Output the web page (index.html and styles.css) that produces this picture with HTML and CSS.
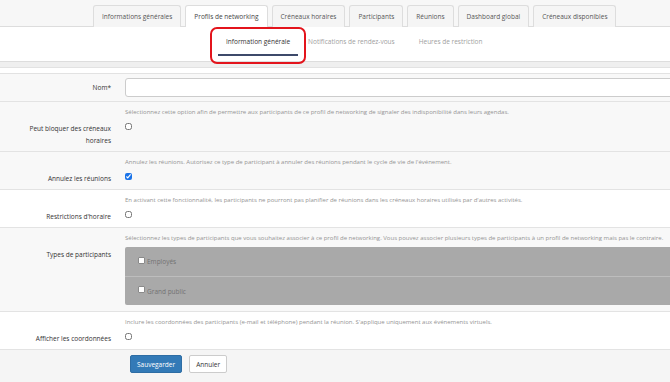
FILE: index.html
```html
<!DOCTYPE html>
<html lang="fr">
<head>
  <meta charset="UTF-8" />
  <meta name="viewport" content="width=device-width, initial-scale=1.0"/>
  <title>Profils de networking</title>
  <link rel="stylesheet" href="styles.css">
</head>
<body>
  <div class="page">
    <!-- Main tabs -->
    <nav class="tabs">
      <a class="tab">Informations générales</a>
      <a class="tab active">Profils de networking</a>
      <a class="tab">Créneaux horaires</a>
      <a class="tab">Participants</a>
      <a class="tab">Réunions</a>
      <a class="tab">Dashboard global</a>
      <a class="tab">Créneaux disponibles</a>
    </nav>

    <!-- Sub tabs -->
    <nav class="subtabs">
      <a class="subtab active">Information générale</a>
      <a class="subtab">Notifications de rendez-vous</a>
      <a class="subtab">Heures de restriction</a>
      <span class="highlight"></span>
    </nav>

    <div class="spacer"></div>

    <form class="form">
      <div class="row row-name">
        <label class="label">Nom*</label>
        <div class="field"><input type="text" class="input"></div>
      </div>

      <div class="row">
        <label class="label">Peut bloquer des créneaux horaires</label>
        <div class="field">
          <p class="help">Sélectionnez cette option afin de permettre aux participants de ce profil de networking de signaler des indisponibilité dans leurs agendas.</p>
          <input type="checkbox" class="check">
        </div>
      </div>

      <div class="row">
        <label class="label">Annulez les réunions</label>
        <div class="field">
          <p class="help">Annulez les réunions. Autorisez ce type de participant à annuler des réunions pendant le cycle de vie de l'événement.</p>
          <input type="checkbox" class="check" checked>
        </div>
      </div>

      <div class="row white">
        <label class="label">Restrictions d'horaire</label>
        <div class="field">
          <p class="help">En activant cette fonctionnalité, les participants ne pourront pas planifier de réunions dans les créneaux horaires utilisés par d'autres activités.</p>
          <input type="checkbox" class="check">
        </div>
      </div>

      <div class="row">
        <label class="label">Types de participants</label>
        <div class="field">
          <p class="help">Sélectionnez les types de participants que vous souhaitez associer à ce profil de networking. Vous pouvez associer plusieurs types de participants à un profil de networking mais pas le contraire.</p>
          <div class="types">
            <div class="type"><input type="checkbox" class="type-check"> Employés</div>
            <div class="type"><input type="checkbox" class="type-check"> Grand public</div>
          </div>
        </div>
      </div>

      <div class="row white">
        <label class="label">Afficher les coordonnées</label>
        <div class="field">
          <p class="help">Inclure les coordonnées des participants (e-mail et téléphone) pendant la réunion. S'applique uniquement aux événements virtuels.</p>
          <input type="checkbox" class="check">
        </div>
      </div>

      <div class="actions">
        <button type="button" class="btn btn-primary">Sauvegarder</button>
        <button type="button" class="btn">Annuler</button>
      </div>
    </form>
  </div>
</body>
</html>
```

FILE: styles.css
```css
html, body {
  margin: 0;
  overflow: hidden;
}
body {
  font-family: "Open Sans", "Noto Sans", sans-serif;
  background-color: #fff;
  color: #333;
}
.page {
  width: 780px;
}
.tabs {
  display: flex;
  gap: 4px;
  padding: 5px 0 0 93px;
  background-color: #f7f7f7;
  border-bottom: 1px solid #ddd;
  height: 21px;
}
.tab {
  display: flex;
  align-items: center;
  padding: 0 8px;
  font-size: 6.5px;
  color: #555;
  background-color: #f5f5f5;
  border: 1px solid #ddd;
  border-bottom: none;
  border-radius: 3px 3px 0 0;
  margin-bottom: -1px;
}
.tab.active {
  background-color: #fff;
  color: #444;
  padding-bottom: 1px;
}
.subtabs {
  position: relative;
  display: flex;
  gap: 2px;
  height: 34px;
  padding-left: 218px;
  background-color: #fff;
  border-bottom: 1px solid #ddd;
}
.subtab {
  display: flex;
  align-items: center;
  padding: 2px 8px 0;
  font-size: 6.5px;
  color: #a0a0a0;
  border-bottom: 2px solid transparent;
  height: 25px;
}
.subtab:last-of-type {
  margin-left: 6px;
}
.subtab.active {
  color: #333;
  border-bottom-color: #3d4a6a;
}
.highlight {
  position: absolute;
  left: 210px;
  top: 0;
  width: 92px;
  height: 33px;
  border: 2.5px solid #e3141c;
  border-radius: 7px;
}
.spacer {
  height: 5px;
  background-color: #efefef;
  border-bottom: 1px solid #e2e2e2;
  margin-bottom: 5px;
}
.form {
  border-top: 1px solid #e2e2e2;
}
.row {
  display: grid;
  grid-template-columns: 125px 1fr;
  padding: 5px 0 4px;
  background-color: #f8f8f8;
  border-bottom: 1px solid #e3e3e3;
}
.row.white {
  background-color: #fff;
}
.row-name {
  padding: 4px 0 4px;
}
.row-name .label {
  padding-top: 4px;
}
.label {
  text-align: right;
  padding: 16px 14px 0 25px;
  font-size: 6.5px;
  line-height: 12px;
  color: #333;
}
.field {
  display: flex;
  flex-direction: column;
  align-items: flex-start;
}
.input {
  box-sizing: border-box;
  width: 100%;
  height: 19px;
  border: 1px solid #ccc;
  border-radius: 3px;
  background-color: #fff;
  margin: 0;
}
.help {
  margin: 0;
  font-size: 6px;
  line-height: 10px;
  color: #949494;
  white-space: nowrap;
}
.check {
  width: 7px;
  height: 7px;
  margin: 6px 0 0;
  accent-color: #1a73e8;
}
.types {
  align-self: stretch;
  margin: 4px 0 2px;
  background-color: #a9a9a9;
  border-radius: 2px;
}
.type {
  display: flex;
  align-items: center;
  gap: 2px;
  height: 29px;
  padding-left: 13px;
  font-size: 6.5px;
  color: #727272;
}
.type + .type {
  border-top: 1px solid #bdbdbd;
  height: 28px;
}
.type-check {
  appearance: none;
  box-sizing: border-box;
  width: 7px;
  height: 7px;
  margin: -3px 0 0;
  background-color: #fff;
  border: 1px solid #8a8a8a;
  border-radius: 1px;
}
.actions {
  display: flex;
  gap: 7px;
  padding: 5px 0 9px 130px;
  background-color: #f5f5f5;
}
.btn {
  font-family: inherit;
  font-size: 6.5px;
  height: 18px;
  padding: 0 6px;
  border: 1px solid #ccc;
  border-radius: 2px;
  background-color: #fff;
  color: #333;
  cursor: pointer;
}
.btn-primary {
  background-color: #337ab7;
  border-color: #2e6da4;
  color: #fff;
}
```
